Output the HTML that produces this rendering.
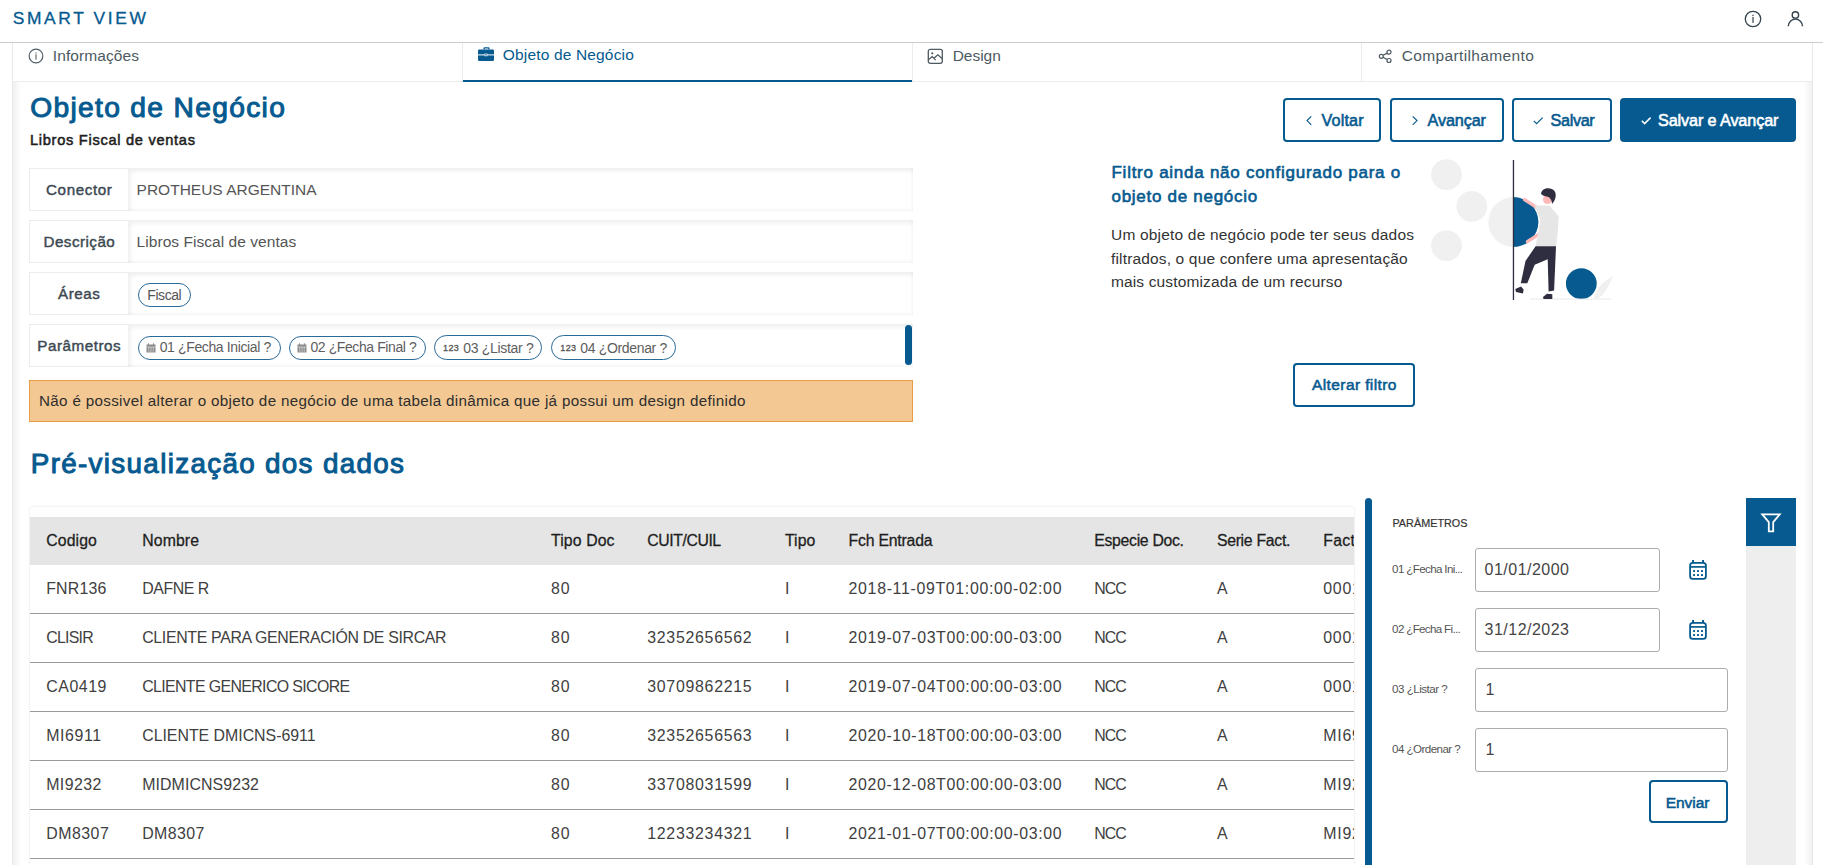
<!DOCTYPE html>
<html><head><meta charset="utf-8"><title>Smart View</title>
<style>
html,body{margin:0;padding:0;}
body{width:1823px;height:865px;overflow:hidden;position:relative;background:#fff;font-family:"Liberation Sans",sans-serif;}
.t{position:absolute;white-space:nowrap;line-height:1;}
.b{position:absolute;}
</style></head><body>
<div class="t" style="left:12.70px;top:10.31px;font-size:17.4px;color:#065a8f;letter-spacing:2.631px;-webkit-text-stroke:0.31px #065a8f;">SMART VIEW</div>
<div class="b" style="left:0px;top:42px;width:1823px;height:1px;background:#cdcdcd"></div>
<svg class="b" style="left:1744px;top:10px" width="18" height="18" viewBox="0 0 18 18"><circle cx="9" cy="9" r="7.7" fill="none" stroke="#34444f" stroke-width="1.3"/><rect x="8.4" y="6.9" width="1.2" height="6" fill="#34444f"/><rect x="8.4" y="4.7" width="1.2" height="1.3" fill="#34444f"/></svg>
<svg class="b" style="left:1786px;top:10px" width="19" height="18" viewBox="0 0 19 18"><circle cx="9.4" cy="4.9" r="3.2" fill="none" stroke="#34444f" stroke-width="1.4"/><path d="M2.3 16.2 A7.1 7.1 0 0 1 16.5 16.2" fill="none" stroke="#34444f" stroke-width="1.4"/></svg>
<div class="b" style="left:12px;top:43px;width:1px;height:830px;background:#e9e9e9"></div>
<div class="b" style="left:1812px;top:43px;width:1px;height:830px;background:#e9e9e9"></div>
<div class="b" style="left:13px;top:81px;width:1799px;height:1px;background:#ececec"></div>
<div class="b" style="left:462px;top:43px;width:1px;height:38px;background:#ececec"></div>
<div class="b" style="left:912px;top:43px;width:1px;height:38px;background:#ececec"></div>
<div class="b" style="left:1361px;top:43px;width:1px;height:38px;background:#ececec"></div>
<div class="b" style="left:463px;top:80px;width:449px;height:2px;background:#065a8f"></div>
<div class="b" style="left:13px;top:82px;width:8px;height:790px;background:linear-gradient(to right,rgba(0,0,0,.06),rgba(0,0,0,0))"></div>
<div class="b" style="left:1804px;top:82px;width:8px;height:790px;background:linear-gradient(to left,rgba(0,0,0,.06),rgba(0,0,0,0))"></div>
<svg class="b" style="left:28px;top:48px" width="16" height="16" viewBox="0 0 16 16"><circle cx="8" cy="8" r="6.85" fill="none" stroke="#4d5a62" stroke-width="1.15"/><rect x="7.5" y="6.3" width="1.05" height="5.3" fill="#4d5a62"/><rect x="7.5" y="4.4" width="1.05" height="1.2" fill="#4d5a62"/></svg>
<div class="t" style="left:52.80px;top:47.83px;font-size:15.5px;color:#4d5a62;letter-spacing:0.097px;">Informações</div>
<svg class="b" style="left:477px;top:46px" width="18" height="16" viewBox="0 0 18 16"><path d="M6.5 1.2h5a1 1 0 0 1 1 1V3.4h-1.3V2.5H7.8v.9H6.5V2.2a1 1 0 0 1 .9-1z" fill="#065a8f"/><rect x="1" y="3.4" width="16" height="11.6" rx="1.3" fill="#065a8f"/><rect x="1" y="8.4" width="16" height="1" fill="#fff"/><rect x="7.6" y="7.6" width="2.8" height="2.6" fill="#fff"/><rect x="8.3" y="8.2" width="1.4" height="1.3" fill="#065a8f"/></svg>
<div class="t" style="left:502.80px;top:46.62px;font-size:15.5px;color:#065a8f;letter-spacing:0.161px;">Objeto de Negócio</div>
<svg class="b" style="left:927px;top:48px" width="17" height="17" viewBox="0 0 17 17"><rect x="1.3" y="1.3" width="14" height="14" rx="2" fill="none" stroke="#4d5a62" stroke-width="1.3"/><circle cx="5.3" cy="5.3" r="1.1" fill="#4d5a62"/><path d="M1.5 11.8l3.6-3.2 3.6 3.4M6.9 10.3l4-3.6 4.4 4" fill="none" stroke="#4d5a62" stroke-width="1.2"/></svg>
<div class="t" style="left:952.70px;top:47.73px;font-size:15.5px;color:#4d5a62;letter-spacing:-0.036px;">Design</div>
<svg class="b" style="left:1378px;top:49px" width="15" height="15" viewBox="0 0 15 15"><circle cx="3.3" cy="7.3" r="2" fill="none" stroke="#4d5a62" stroke-width="1.2"/><circle cx="11" cy="3.2" r="2" fill="none" stroke="#4d5a62" stroke-width="1.2"/><circle cx="11" cy="11.5" r="2" fill="none" stroke="#4d5a62" stroke-width="1.2"/><path d="M5.1 6.3l4.1-2.2M5.1 8.3l4.1 2.2" stroke="#4d5a62" stroke-width="1.2"/></svg>
<div class="t" style="left:1401.80px;top:47.83px;font-size:15.5px;color:#4d5a62;letter-spacing:0.358px;">Compartilhamento</div>
<div class="t" style="left:30.20px;top:93.23px;font-size:28.2px;color:#065a8f;letter-spacing:1.323px;-webkit-text-stroke:1.02px #065a8f;">Objeto de Negócio</div>
<div class="t" style="left:30.00px;top:132.59px;font-size:14.6px;color:#1e1e1e;letter-spacing:0.714px;-webkit-text-stroke:0.53px #1e1e1e;">Libros Fiscal de ventas</div>
<div class="b" style="left:29px;top:168px;width:884px;height:43px;background:#fff;box-shadow:0 0 0 1px #ececec inset"></div>
<div class="b" style="left:128px;top:168px;width:785px;height:43px;background:#fff;box-shadow:inset 2px 3px 5px rgba(0,0,0,.07), inset -1px -2px 3px rgba(0,0,0,.04)"></div>
<div class="t" style="left:46.00px;top:182.08px;font-size:15.2px;color:#3c4952;letter-spacing:0.613px;-webkit-text-stroke:0.43px #3c4952;">Conector</div>
<div class="b" style="left:29px;top:220px;width:884px;height:43px;background:#fff;box-shadow:0 0 0 1px #ececec inset"></div>
<div class="b" style="left:128px;top:220px;width:785px;height:43px;background:#fff;box-shadow:inset 2px 3px 5px rgba(0,0,0,.07), inset -1px -2px 3px rgba(0,0,0,.04)"></div>
<div class="t" style="left:43.50px;top:233.58px;font-size:15.2px;color:#3c4952;letter-spacing:0.467px;-webkit-text-stroke:0.43px #3c4952;">Descrição</div>
<div class="b" style="left:29px;top:272px;width:884px;height:43px;background:#fff;box-shadow:0 0 0 1px #ececec inset"></div>
<div class="b" style="left:128px;top:272px;width:785px;height:43px;background:#fff;box-shadow:inset 2px 3px 5px rgba(0,0,0,.07), inset -1px -2px 3px rgba(0,0,0,.04)"></div>
<div class="t" style="left:58.00px;top:285.88px;font-size:15.2px;color:#3c4952;letter-spacing:0.532px;-webkit-text-stroke:0.43px #3c4952;">Áreas</div>
<div class="b" style="left:29px;top:324px;width:884px;height:43px;background:#fff;box-shadow:0 0 0 1px #ececec inset"></div>
<div class="b" style="left:128px;top:324px;width:785px;height:43px;background:#fff;box-shadow:inset 2px 3px 5px rgba(0,0,0,.07), inset -1px -2px 3px rgba(0,0,0,.04)"></div>
<div class="t" style="left:37.30px;top:338.08px;font-size:15.2px;color:#3c4952;letter-spacing:0.546px;-webkit-text-stroke:0.43px #3c4952;">Parâmetros</div>
<div class="t" style="left:136.60px;top:181.82px;font-size:15.5px;color:#555;letter-spacing:-0.002px;">PROTHEUS ARGENTINA</div>
<div class="t" style="left:136.60px;top:233.72px;font-size:15.5px;color:#555;letter-spacing:0.051px;">Libros Fiscal de ventas</div>
<div class="b" style="left:138px;top:283.3px;width:52.7px;height:23.4px;border:1px solid #2a6a98;border-radius:12px;box-sizing:border-box"></div>
<div class="t" style="left:147.30px;top:287.60px;font-size:14px;color:#555;letter-spacing:-0.428px;">Fiscal</div>
<div class="b" style="left:138px;top:336px;width:142.6px;height:23.7px;border:1px solid #2a6a98;border-radius:12px;box-sizing:border-box"></div>
<svg class="b" style="left:146px;top:343px" width="10" height="10" viewBox="0 0 10 10"><rect x="0.5" y="1.5" width="9" height="8" fill="#8a8a8a"/><rect x="2" y="0.3" width="1" height="2" fill="#8a8a8a"/><rect x="7" y="0.3" width="1" height="2" fill="#8a8a8a"/><path d="M0.5 4h9M2.8 4v5.5M5 4v5.5M7.2 4v5.5" stroke="#fff" stroke-width=".5"/></svg>
<div class="t" style="left:159.70px;top:340.10px;font-size:14px;color:#5e5e5e;letter-spacing:-0.372px;">01 ¿Fecha Inicial ?</div>
<div class="b" style="left:289px;top:336px;width:136.7px;height:23.7px;border:1px solid #2a6a98;border-radius:12px;box-sizing:border-box"></div>
<svg class="b" style="left:297px;top:343px" width="10" height="10" viewBox="0 0 10 10"><rect x="0.5" y="1.5" width="9" height="8" fill="#8a8a8a"/><rect x="2" y="0.3" width="1" height="2" fill="#8a8a8a"/><rect x="7" y="0.3" width="1" height="2" fill="#8a8a8a"/><path d="M0.5 4h9M2.8 4v5.5M5 4v5.5M7.2 4v5.5" stroke="#fff" stroke-width=".5"/></svg>
<div class="t" style="left:310.40px;top:340.10px;font-size:14px;color:#5e5e5e;letter-spacing:-0.402px;">02 ¿Fecha Final ?</div>
<div class="b" style="left:433.7px;top:335.2px;width:108.7px;height:25.2px;border:1px solid #2a6a98;border-radius:13px;box-sizing:border-box"></div>
<div class="t" style="left:443.00px;top:344.15px;font-size:9px;color:#555;letter-spacing:0.385px;-webkit-text-stroke:0.32px #555;">123</div>
<div class="t" style="left:463.30px;top:341.10px;font-size:14px;color:#5e5e5e;letter-spacing:-0.32px;">03 ¿Listar ?</div>
<div class="b" style="left:551px;top:335.2px;width:124.6px;height:25.2px;border:1px solid #2a6a98;border-radius:13px;box-sizing:border-box"></div>
<div class="t" style="left:560.30px;top:344.15px;font-size:9px;color:#555;letter-spacing:0.385px;-webkit-text-stroke:0.32px #555;">123</div>
<div class="t" style="left:580.30px;top:341.10px;font-size:14px;color:#5e5e5e;letter-spacing:-0.339px;">04 ¿Ordenar ?</div>
<div class="b" style="left:905px;top:324.6px;width:7px;height:40.2px;background:#065a8f;border-radius:4px"></div>
<div class="b" style="left:29.3px;top:379.5px;width:884px;height:42px;background:#f3c893;border:1px solid #eb9d45;box-sizing:border-box"></div>
<div class="t" style="left:39.00px;top:392.78px;font-size:15.2px;color:#2e2e2e;letter-spacing:0.328px;">Não é possivel alterar o objeto de negócio de uma tabela dinâmica que já possui um design definido</div>
<div class="b" style="left:1283px;top:98px;width:98px;height:44px;border:2px solid #065a8f;border-radius:4px;box-sizing:border-box"></div>
<svg class="b" style="left:1305px;top:114px" width="9" height="13" viewBox="0 0 9 13"><path d="M6.3 2.3 L2 6.6 L6.3 10.9" fill="none" stroke="#065a8f" stroke-width="1.15"/></svg>
<div class="t" style="left:1321.40px;top:111.63px;font-size:16.2px;color:#065a8f;letter-spacing:0.182px;-webkit-text-stroke:0.58px #065a8f;">Voltar</div>
<div class="b" style="left:1389.5px;top:98px;width:114.0px;height:44px;border:2px solid #065a8f;border-radius:4px;box-sizing:border-box"></div>
<svg class="b" style="left:1410px;top:114px" width="9" height="13" viewBox="0 0 9 13"><path d="M2.7 2.3 L7 6.6 L2.7 10.9" fill="none" stroke="#065a8f" stroke-width="1.15"/></svg>
<div class="t" style="left:1427.50px;top:111.63px;font-size:16.2px;color:#065a8f;letter-spacing:-0.105px;-webkit-text-stroke:0.58px #065a8f;">Avançar</div>
<div class="b" style="left:1512px;top:98px;width:99.6px;height:44px;border:2px solid #065a8f;border-radius:4px;box-sizing:border-box"></div>
<svg class="b" style="left:1532px;top:114px" width="12" height="12" viewBox="0 0 12 12"><path d="M1.8 6.8 L4.6 9.6 L10.6 3.6" fill="none" stroke="#065a8f" stroke-width="1.2"/></svg>
<div class="t" style="left:1550.50px;top:111.63px;font-size:16.2px;color:#065a8f;letter-spacing:-0.325px;-webkit-text-stroke:0.58px #065a8f;">Salvar</div>
<div class="b" style="left:1620px;top:98px;width:176px;height:44px;background:#065a8f;border-radius:4px"></div>
<svg class="b" style="left:1640px;top:114px" width="12" height="12" viewBox="0 0 12 12"><path d="M1.8 6.8 L4.6 9.6 L10.6 3.6" fill="none" stroke="#fff" stroke-width="1.5"/></svg>
<div class="t" style="left:1658.00px;top:111.63px;font-size:16.2px;color:#fff;letter-spacing:-0.11px;-webkit-text-stroke:0.58px #fff;">Salvar e Avançar</div>
<div class="t" style="left:1111.50px;top:164.25px;font-size:17px;color:#065a8f;letter-spacing:0.736px;-webkit-text-stroke:0.61px #065a8f;">Filtro ainda não configurado para o</div>
<div class="t" style="left:1111.50px;top:187.85px;font-size:17px;color:#065a8f;letter-spacing:0.712px;-webkit-text-stroke:0.61px #065a8f;">objeto de negócio</div>
<div class="t" style="left:1111.00px;top:226.82px;font-size:15.5px;color:#333;letter-spacing:0.19px;">Um objeto de negócio pode ter seus dados</div>
<div class="t" style="left:1111.00px;top:250.57px;font-size:15.5px;color:#333;letter-spacing:0.158px;">filtrados, o que confere uma apresentação</div>
<div class="t" style="left:1111.00px;top:274.32px;font-size:15.5px;color:#333;letter-spacing:0.132px;">mais customizada de um recurso</div>
<svg class="b" style="left:1420px;top:150px" width="210" height="160" viewBox="0 0 210 160">
<circle cx="26.5" cy="24.6" r="15.4" fill="#f0f0f0"/>
<circle cx="51.8" cy="56.4" r="15.4" fill="#f0f0f0"/>
<circle cx="26.5" cy="95.6" r="15.4" fill="#f0f0f0"/>
<circle cx="93.4" cy="72" r="25" fill="#f0f0f0"/>
<path d="M93.4 47 A25 25 0 0 1 93.4 97 Z" fill="#065a8f"/>
<circle cx="161.3" cy="133.6" r="15.4" fill="#065a8f"/>
<rect x="110" y="148.6" width="81" height="0.9" fill="#e6e6e6"/>
<rect x="92.8" y="10" width="1.3" height="140" fill="#2f2e41"/>
<path d="M104.5 49.6 L116.6 57.4" stroke="#ffb8b8" stroke-width="3.2" stroke-linecap="round"/>
<path d="M107.3 91.6 L120.3 83.3" stroke="#ffb8b8" stroke-width="3.2" stroke-linecap="round"/>
<path d="M114.7 55.5 L129.5 55.5 L138.8 66.6 L137.8 81.4 L136 96.2 L115.6 96.2 L118.4 81.4 L120.3 70.3 Z" fill="#e6e6e6"/>
<path d="M115.6 96.2 L136 96.2 L134.1 140.6 L128.6 141.5 L127.7 109.2 L114.7 114.7 L107.3 133.2 L100.8 133.2 L105.5 111 Z" fill="#2f2e41"/>
<path d="M95.3 139 L101 136.5 L103.6 139.5 L103 143.4 L96 142 Z" fill="#2f2e41"/>
<path d="M123 147 L127 143.8 L132.3 144.3 L132.3 149 L123.5 149 Z" fill="#2f2e41"/>
<circle cx="127.5" cy="49.5" r="4.6" fill="#ffb8b8"/>
<path d="M121 43.5 C122 37.5 131 36.5 134.5 41 C137 44.5 135.5 50.5 132 54 C132 50 130 47 126.5 46.5 C124 46 122 45.5 121 43.5 Z" fill="#2f2e41"/>
<path d="M173.5 148 C176 139 183 131 193.5 126 C189 133 187 143 178 148.5 Z" fill="#f0f0f0"/>
</svg>
<div class="b" style="left:1293px;top:363px;width:122px;height:44px;border:2px solid #065a8f;border-radius:4px;box-sizing:border-box"></div>
<div class="t" style="left:1312.00px;top:376.82px;font-size:15.5px;color:#065a8f;letter-spacing:0.401px;-webkit-text-stroke:0.56px #065a8f;">Alterar filtro</div>
<div class="t" style="left:30.80px;top:449.87px;font-size:27.8px;color:#065a8f;letter-spacing:1.328px;-webkit-text-stroke:1.00px #065a8f;">Pré-visualização dos dados</div>
<div class="b" style="left:30px;top:507px;width:1324px;height:400px;box-shadow:0 0 2px 1px rgba(0,0,0,.06);border-radius:3px;background:#fff"></div>
<div class="b" style="left:30px;top:517px;width:1324px;height:48px;background:#e5e5e5"></div>
<div class="b" style="left:30px;top:507px;width:1324px;height:358px;overflow:hidden">
<div class="t" style="left:16.20px;top:25.57px;font-size:15.8px;color:#1e1e1e;letter-spacing:0.123px;-webkit-text-stroke:0.28px #1e1e1e;">Codigo</div>
<div class="t" style="left:112.20px;top:25.57px;font-size:15.8px;color:#1e1e1e;letter-spacing:0.126px;-webkit-text-stroke:0.28px #1e1e1e;">Nombre</div>
<div class="t" style="left:521.00px;top:25.57px;font-size:15.8px;color:#1e1e1e;letter-spacing:0.122px;-webkit-text-stroke:0.28px #1e1e1e;">Tipo Doc</div>
<div class="t" style="left:617.20px;top:25.57px;font-size:15.8px;color:#1e1e1e;letter-spacing:-0.408px;-webkit-text-stroke:0.28px #1e1e1e;">CUIT/CUIL</div>
<div class="t" style="left:754.90px;top:25.57px;font-size:15.8px;color:#1e1e1e;letter-spacing:0.107px;-webkit-text-stroke:0.28px #1e1e1e;">Tipo</div>
<div class="t" style="left:818.60px;top:25.57px;font-size:15.8px;color:#1e1e1e;letter-spacing:-0.211px;-webkit-text-stroke:0.28px #1e1e1e;">Fch Entrada</div>
<div class="t" style="left:1064.30px;top:25.57px;font-size:15.8px;color:#1e1e1e;letter-spacing:-0.306px;-webkit-text-stroke:0.28px #1e1e1e;">Especie Doc.</div>
<div class="t" style="left:1186.90px;top:25.57px;font-size:15.8px;color:#1e1e1e;letter-spacing:-0.289px;-webkit-text-stroke:0.28px #1e1e1e;">Serie Fact.</div>
<div class="t" style="left:1293.20px;top:25.57px;font-size:15.8px;color:#1e1e1e;letter-spacing:0.3px;-webkit-text-stroke:0.28px #1e1e1e;">Fact. N</div>
<div class="t" style="left:16.20px;top:74.48px;font-size:15.9px;color:#404040;letter-spacing:0.214px;">FNR136</div>
<div class="t" style="left:112.20px;top:74.48px;font-size:15.9px;color:#404040;letter-spacing:-0.433px;">DAFNE R</div>
<div class="t" style="left:521.00px;top:74.48px;font-size:15.9px;color:#404040;letter-spacing:0.851px;">80</div>
<div class="t" style="left:754.90px;top:74.48px;font-size:15.9px;color:#404040;letter-spacing:0.8px;">I</div>
<div class="t" style="left:818.60px;top:74.48px;font-size:15.9px;color:#404040;letter-spacing:0.673px;">2018-11-09T01:00:00-02:00</div>
<div class="t" style="left:1064.30px;top:74.48px;font-size:15.9px;color:#404040;letter-spacing:-1.012px;">NCC</div>
<div class="t" style="left:1186.90px;top:74.48px;font-size:15.9px;color:#404040;letter-spacing:0.347px;">A</div>
<div class="t" style="left:1293.20px;top:74.48px;font-size:15.9px;color:#404040;letter-spacing:0.8px;">0001</div>
<div class="b" style="left:0px;top:106px;width:1324px;height:1px;background:#9a9a9a"></div>
<div class="t" style="left:16.20px;top:123.48px;font-size:15.9px;color:#404040;letter-spacing:-0.756px;">CLISIR</div>
<div class="t" style="left:112.20px;top:123.48px;font-size:15.9px;color:#404040;letter-spacing:-0.329px;">CLIENTE PARA GENERACIÓN DE SIRCAR</div>
<div class="t" style="left:521.00px;top:123.48px;font-size:15.9px;color:#404040;letter-spacing:0.851px;">80</div>
<div class="t" style="left:617.20px;top:123.48px;font-size:15.9px;color:#404040;letter-spacing:0.729px;">32352656562</div>
<div class="t" style="left:754.90px;top:123.48px;font-size:15.9px;color:#404040;letter-spacing:0.8px;">I</div>
<div class="t" style="left:818.60px;top:123.48px;font-size:15.9px;color:#404040;letter-spacing:0.624px;">2019-07-03T00:00:00-03:00</div>
<div class="t" style="left:1064.30px;top:123.48px;font-size:15.9px;color:#404040;letter-spacing:-1.012px;">NCC</div>
<div class="t" style="left:1186.90px;top:123.48px;font-size:15.9px;color:#404040;letter-spacing:0.347px;">A</div>
<div class="t" style="left:1293.20px;top:123.48px;font-size:15.9px;color:#404040;letter-spacing:0.8px;">0001</div>
<div class="b" style="left:0px;top:155px;width:1324px;height:1px;background:#9a9a9a"></div>
<div class="t" style="left:16.20px;top:172.49px;font-size:15.9px;color:#404040;letter-spacing:0.564px;">CA0419</div>
<div class="t" style="left:112.20px;top:172.49px;font-size:15.9px;color:#404040;letter-spacing:-0.624px;">CLIENTE GENERICO SICORE</div>
<div class="t" style="left:521.00px;top:172.49px;font-size:15.9px;color:#404040;letter-spacing:0.851px;">80</div>
<div class="t" style="left:617.20px;top:172.49px;font-size:15.9px;color:#404040;letter-spacing:0.729px;">30709862215</div>
<div class="t" style="left:754.90px;top:172.49px;font-size:15.9px;color:#404040;letter-spacing:0.8px;">I</div>
<div class="t" style="left:818.60px;top:172.49px;font-size:15.9px;color:#404040;letter-spacing:0.624px;">2019-07-04T00:00:00-03:00</div>
<div class="t" style="left:1064.30px;top:172.49px;font-size:15.9px;color:#404040;letter-spacing:-1.012px;">NCC</div>
<div class="t" style="left:1186.90px;top:172.49px;font-size:15.9px;color:#404040;letter-spacing:0.347px;">A</div>
<div class="t" style="left:1293.20px;top:172.49px;font-size:15.9px;color:#404040;letter-spacing:0.8px;">0001</div>
<div class="b" style="left:0px;top:204px;width:1324px;height:1px;background:#9a9a9a"></div>
<div class="t" style="left:16.20px;top:221.49px;font-size:15.9px;color:#404040;letter-spacing:0.593px;">MI6911</div>
<div class="t" style="left:112.20px;top:221.49px;font-size:15.9px;color:#404040;letter-spacing:-0.016px;">CLIENTE DMICNS-6911</div>
<div class="t" style="left:521.00px;top:221.49px;font-size:15.9px;color:#404040;letter-spacing:0.851px;">80</div>
<div class="t" style="left:617.20px;top:221.49px;font-size:15.9px;color:#404040;letter-spacing:0.729px;">32352656563</div>
<div class="t" style="left:754.90px;top:221.49px;font-size:15.9px;color:#404040;letter-spacing:0.8px;">I</div>
<div class="t" style="left:818.60px;top:221.49px;font-size:15.9px;color:#404040;letter-spacing:0.624px;">2020-10-18T00:00:00-03:00</div>
<div class="t" style="left:1064.30px;top:221.49px;font-size:15.9px;color:#404040;letter-spacing:-1.012px;">NCC</div>
<div class="t" style="left:1186.90px;top:221.49px;font-size:15.9px;color:#404040;letter-spacing:0.347px;">A</div>
<div class="t" style="left:1293.20px;top:221.49px;font-size:15.9px;color:#404040;letter-spacing:0.8px;">MI6911</div>
<div class="b" style="left:0px;top:253px;width:1324px;height:1px;background:#9a9a9a"></div>
<div class="t" style="left:16.20px;top:270.49px;font-size:15.9px;color:#404040;letter-spacing:0.435px;">MI9232</div>
<div class="t" style="left:112.20px;top:270.49px;font-size:15.9px;color:#404040;letter-spacing:0.095px;">MIDMICNS9232</div>
<div class="t" style="left:521.00px;top:270.49px;font-size:15.9px;color:#404040;letter-spacing:0.851px;">80</div>
<div class="t" style="left:617.20px;top:270.49px;font-size:15.9px;color:#404040;letter-spacing:0.729px;">33708031599</div>
<div class="t" style="left:754.90px;top:270.49px;font-size:15.9px;color:#404040;letter-spacing:0.8px;">I</div>
<div class="t" style="left:818.60px;top:270.49px;font-size:15.9px;color:#404040;letter-spacing:0.624px;">2020-12-08T00:00:00-03:00</div>
<div class="t" style="left:1064.30px;top:270.49px;font-size:15.9px;color:#404040;letter-spacing:-1.012px;">NCC</div>
<div class="t" style="left:1186.90px;top:270.49px;font-size:15.9px;color:#404040;letter-spacing:0.347px;">A</div>
<div class="t" style="left:1293.20px;top:270.49px;font-size:15.9px;color:#404040;letter-spacing:0.8px;">MI9232</div>
<div class="b" style="left:0px;top:302px;width:1324px;height:1px;background:#9a9a9a"></div>
<div class="t" style="left:16.20px;top:319.49px;font-size:15.9px;color:#404040;letter-spacing:0.5px;">DM8307</div>
<div class="t" style="left:112.20px;top:319.49px;font-size:15.9px;color:#404040;letter-spacing:0.42px;">DM8307</div>
<div class="t" style="left:521.00px;top:319.49px;font-size:15.9px;color:#404040;letter-spacing:0.851px;">80</div>
<div class="t" style="left:617.20px;top:319.49px;font-size:15.9px;color:#404040;letter-spacing:0.729px;">12233234321</div>
<div class="t" style="left:754.90px;top:319.49px;font-size:15.9px;color:#404040;letter-spacing:0.8px;">I</div>
<div class="t" style="left:818.60px;top:319.49px;font-size:15.9px;color:#404040;letter-spacing:0.624px;">2021-01-07T00:00:00-03:00</div>
<div class="t" style="left:1064.30px;top:319.49px;font-size:15.9px;color:#404040;letter-spacing:-1.012px;">NCC</div>
<div class="t" style="left:1186.90px;top:319.49px;font-size:15.9px;color:#404040;letter-spacing:0.347px;">A</div>
<div class="t" style="left:1293.20px;top:319.49px;font-size:15.9px;color:#404040;letter-spacing:0.8px;">MI9232</div>
<div class="b" style="left:0px;top:351px;width:1324px;height:1px;background:#9a9a9a"></div>
</div>
<div class="b" style="left:1365px;top:498px;width:7px;height:380px;background:#065a8f;border-radius:4px 4px 0 0"></div>
<div class="t" style="left:1392.40px;top:517.82px;font-size:10.8px;color:#333;letter-spacing:0.034px;-webkit-text-stroke:0.19px #333;">PARÂMETROS</div>
<div class="t" style="left:1392.10px;top:563.14px;font-size:11.6px;color:#555;letter-spacing:-0.641px;">01 ¿Fecha Ini...</div>
<div class="b" style="left:1475px;top:548px;width:185.0px;height:43.5px;border:1px solid #acacac;border-radius:3px;box-sizing:border-box;background:#fff"></div>
<div class="t" style="left:1484.60px;top:562.40px;font-size:16px;color:#444;letter-spacing:0.48px;">01/01/2000</div>
<svg class="b" style="left:1688px;top:559px" width="20" height="22" viewBox="0 0 20 22"><rect x="2.1" y="3.9" width="15.8" height="15.9" rx="2.6" fill="none" stroke="#065a8f" stroke-width="1.8"/><path d="M2 7.9 H18" stroke="#065a8f" stroke-width="1.7"/><rect x="4.1" y="1" width="1.9" height="3.2" fill="#065a8f"/><rect x="14.1" y="1" width="1.9" height="3.2" fill="#065a8f"/><g fill="#065a8f"><rect x="5.1" y="11.1" width="1.9" height="1.9"/><rect x="9.05" y="11.1" width="1.9" height="1.9"/><rect x="13" y="11.1" width="1.9" height="1.9"/><rect x="5.1" y="15.1" width="1.9" height="1.9"/><rect x="9.05" y="15.1" width="1.9" height="1.9"/><rect x="13" y="15.1" width="1.9" height="1.9"/></g></svg>
<div class="t" style="left:1392.10px;top:623.14px;font-size:11.6px;color:#555;letter-spacing:-0.665px;">02 ¿Fecha Fi...</div>
<div class="b" style="left:1475px;top:608px;width:185.0px;height:43.5px;border:1px solid #acacac;border-radius:3px;box-sizing:border-box;background:#fff"></div>
<div class="t" style="left:1484.60px;top:622.40px;font-size:16px;color:#444;letter-spacing:0.48px;">31/12/2023</div>
<svg class="b" style="left:1688px;top:619px" width="20" height="22" viewBox="0 0 20 22"><rect x="2.1" y="3.9" width="15.8" height="15.9" rx="2.6" fill="none" stroke="#065a8f" stroke-width="1.8"/><path d="M2 7.9 H18" stroke="#065a8f" stroke-width="1.7"/><rect x="4.1" y="1" width="1.9" height="3.2" fill="#065a8f"/><rect x="14.1" y="1" width="1.9" height="3.2" fill="#065a8f"/><g fill="#065a8f"><rect x="5.1" y="11.1" width="1.9" height="1.9"/><rect x="9.05" y="11.1" width="1.9" height="1.9"/><rect x="13" y="11.1" width="1.9" height="1.9"/><rect x="5.1" y="15.1" width="1.9" height="1.9"/><rect x="9.05" y="15.1" width="1.9" height="1.9"/><rect x="13" y="15.1" width="1.9" height="1.9"/></g></svg>
<div class="t" style="left:1392.10px;top:683.14px;font-size:11.6px;color:#555;letter-spacing:-0.504px;">03 ¿Listar ?</div>
<div class="b" style="left:1475px;top:668px;width:253.0px;height:43.5px;border:1px solid #acacac;border-radius:3px;box-sizing:border-box;background:#fff"></div>
<div class="t" style="left:1485.50px;top:682.40px;font-size:16px;color:#444;letter-spacing:0px;">1</div>
<div class="t" style="left:1392.10px;top:743.14px;font-size:11.6px;color:#555;letter-spacing:-0.563px;">04 ¿Ordenar ?</div>
<div class="b" style="left:1475px;top:728px;width:253.0px;height:43.5px;border:1px solid #acacac;border-radius:3px;box-sizing:border-box;background:#fff"></div>
<div class="t" style="left:1485.50px;top:742.40px;font-size:16px;color:#444;letter-spacing:0px;">1</div>
<div class="b" style="left:1648.5px;top:779.8px;width:79.5px;height:43.5px;border:2px solid #065a8f;border-radius:4px;box-sizing:border-box"></div>
<div class="t" style="left:1665.70px;top:794.83px;font-size:15.5px;color:#065a8f;letter-spacing:-0.029px;-webkit-text-stroke:0.56px #065a8f;">Enviar</div>
<div class="b" style="left:1746px;top:546px;width:50px;height:330px;background:#eeeeee"></div>
<div class="b" style="left:1746px;top:498px;width:50px;height:48px;background:#065a8f"></div>
<svg class="b" style="left:1759px;top:512px" width="24" height="22" viewBox="0 0 24 22"><path d="M3.2 2.3 H20.8 L14.2 10.2 V19.4 H9.8 V10.2 Z" fill="none" stroke="#fff" stroke-width="1.8" stroke-linejoin="miter"/></svg>
</body></html>
